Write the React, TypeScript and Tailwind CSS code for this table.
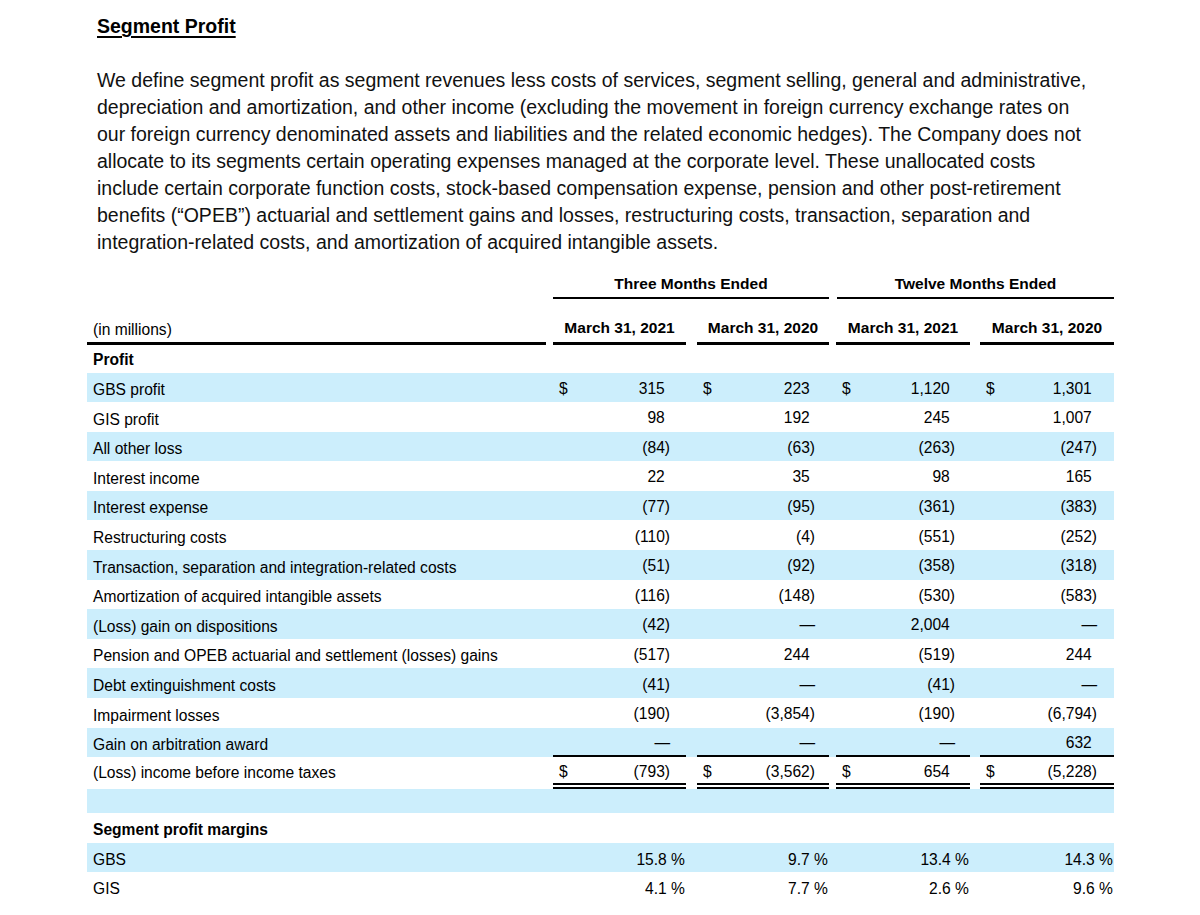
import React from "react";

type Col = { ml: string; w: string; pr: string };

const COLS: Col[] = [
  { ml: "ml-[7px]", w: "w-[133px]", pr: "pr-[16px]" },
  { ml: "ml-[11px]", w: "w-[132px]", pr: "pr-[14px]" },
  { ml: "ml-[7px]", w: "w-[134px]", pr: "pr-[15px]" },
  { ml: "ml-[10px]", w: "w-[134px]", pr: "pr-[17px]" },
];

type Row = { label: string; vals: string[]; shaded: boolean; dollar?: boolean };

const ROWS: Row[] = [
  { label: "GBS profit", vals: ["315", "223", "1,120", "1,301"], shaded: true, dollar: true },
  { label: "GIS profit", vals: ["98", "192", "245", "1,007"], shaded: false },
  { label: "All other loss", vals: ["(84)", "(63)", "(263)", "(247)"], shaded: true },
  { label: "Interest income", vals: ["22", "35", "98", "165"], shaded: false },
  { label: "Interest expense", vals: ["(77)", "(95)", "(361)", "(383)"], shaded: true },
  { label: "Restructuring costs", vals: ["(110)", "(4)", "(551)", "(252)"], shaded: false },
  {
    label: "Transaction, separation and integration-related costs",
    vals: ["(51)", "(92)", "(358)", "(318)"],
    shaded: true,
  },
  { label: "Amortization of acquired intangible assets", vals: ["(116)", "(148)", "(530)", "(583)"], shaded: false },
  { label: "(Loss) gain on dispositions", vals: ["(42)", "—", "2,004", "—"], shaded: true },
  {
    label: "Pension and OPEB actuarial and settlement (losses) gains",
    vals: ["(517)", "244", "(519)", "244"],
    shaded: false,
  },
  { label: "Debt extinguishment costs", vals: ["(41)", "—", "(41)", "—"], shaded: true },
  { label: "Impairment losses", vals: ["(190)", "(3,854)", "(190)", "(6,794)"], shaded: false },
];

const PARA = [
  "We define segment profit as segment revenues less costs of services, segment selling, general and administrative,",
  "depreciation and amortization, and other income (excluding the movement in foreign currency exchange rates on",
  "our foreign currency denominated assets and liabilities and the related economic hedges). The Company does not",
  "allocate to its segments certain operating expenses managed at the corporate level. These unallocated costs",
  "include certain corporate function costs, stock-based compensation expense, pension and other post-retirement",
  "benefits (\u201COPEB\u201D) actuarial and settlement gains and losses, restructuring costs, transaction, separation and",
  "integration-related costs, and amortization of acquired intangible assets.",
];

function NumCell({
  v,
  col,
  dollar,
  extra,
}: {
  v: string;
  col: Col;
  dollar?: boolean;
  extra?: string;
}) {
  const hang = !(v.startsWith("(") || v === "—");
  return (
    <div
      className={`flex h-full items-center justify-between pl-[6px] ${col.ml} ${col.w} ${col.pr} ${extra ?? "pt-[2px]"}`}
    >
      <span>{dollar ? "$" : ""}</span>
      <span>
        {v}
        {hang && <span className="invisible">)</span>}
      </span>
    </div>
  );
}

function Label({ children, bold, pt }: { children: React.ReactNode; bold?: boolean; pt?: string }) {
  return (
    <div className={`flex h-full w-[459px] items-center pl-[6px] ${pt ?? "pt-[5px]"} ${bold ? "font-bold" : ""}`}>
      {children}
    </div>
  );
}

export default function App() {
  return (
    <div className="h-[915px] w-[1200px] overflow-hidden bg-white font-['Liberation_Sans',Arial,sans-serif] text-black">
      <div className="ml-[97px] mt-[14px] text-[19.5px] font-bold leading-[24px] underline underline-offset-[3px] decoration-2">
        Segment Profit
      </div>
      <div className="ml-[97px] mt-[28.5px] text-[19.5px] leading-[27px] text-[#111]">
        {PARA.map((l, i) => (
          <div key={i} className="whitespace-nowrap">
            {l}
          </div>
        ))}
      </div>

      <div className="ml-[87px] mt-[15px] w-[1027px] text-[15.6px]">
        {/* header 1 */}
        <div className="flex text-[15.5px] font-bold">
          <div className="w-[459px]" />
          <div className="ml-[7px] w-[276px] border-b-2 border-black pb-[1px] pt-[1px] text-center leading-[24px]">
            Three Months Ended
          </div>
          <div className="ml-[8px] w-[277px] border-b-2 border-black pb-[1px] pt-[1px] text-center leading-[24px]">
            Twelve Months Ended
          </div>
        </div>
        {/* header 2 */}
        <div className="mt-[17px] flex">
          <div className="w-[459px] border-b-[3px] border-black pl-[6px] pt-[2px] leading-[24px]">(in millions)</div>
          {COLS.map((c, i) => (
            <div
              key={i}
              className={`${c.ml} ${c.w} border-b-[3px] border-black pb-[2px] text-center text-[15.5px] font-bold leading-[24px]`}
            >
              {i % 2 === 0 ? "March 31, 2021" : "March 31, 2020"}
            </div>
          ))}
        </div>
        {/* Profit */}
        <div className="flex h-[28px]">
          <Label bold pt="pt-[2px]">
            Profit
          </Label>
        </div>
        {ROWS.map((r, i) => (
          <div key={i} className={`flex h-[29.6px] ${r.shaded ? "bg-[#cceefc]" : ""}`}>
            <Label>{r.label}</Label>
            {r.vals.map((v, j) => (
              <NumCell key={j} v={v} col={COLS[j]} dollar={r.dollar} />
            ))}
          </div>
        ))}
        {/* Gain on arbitration */}
        <div className="flex h-[29.6px] bg-[#cceefc]">
          <Label>Gain on arbitration award</Label>
          {["—", "—", "—", "632"].map((v, j) => (
            <NumCell key={j} v={v} col={COLS[j]} extra="border-b-2 border-black pt-[3px]" />
          ))}
        </div>
        {/* Loss income before taxes */}
        <div className="flex h-[31.7px]">
          <Label pt="pt-[0px]">(Loss) income before income taxes</Label>
          {["(793)", "(3,562)", "654", "(5,228)"].map((v, j) => (
            <NumCell
              key={j}
              v={v}
              col={COLS[j]}
              dollar
              extra="border-b-[6px] border-double border-black bg-white pt-[4px]"
            />
          ))}
        </div>
        <div className="h-[24px] bg-[#cceefc]" />
        <div className="flex h-[30px]">
          <Label bold pt="pt-[4px]">
            Segment profit margins
          </Label>
        </div>
        {[
          { label: "GBS", vals: ["15.8 %", "9.7 %", "13.4 %", "14.3 %"], shaded: true },
          { label: "GIS", vals: ["4.1 %", "7.7 %", "2.6 %", "9.6 %"], shaded: false },
        ].map((r, i) => (
          <div key={i} className={`flex h-[29px] ${r.shaded ? "bg-[#cceefc]" : ""}`}>
            <Label>{r.label}</Label>
            {r.vals.map((v, j) => (
              <div
                key={j}
                className={`flex h-full items-center justify-end pr-[1px] pt-[5px] ${COLS[j].ml} ${COLS[j].w}`}
              >
                {v}
              </div>
            ))}
          </div>
        ))}
      </div>
    </div>
  );
}
